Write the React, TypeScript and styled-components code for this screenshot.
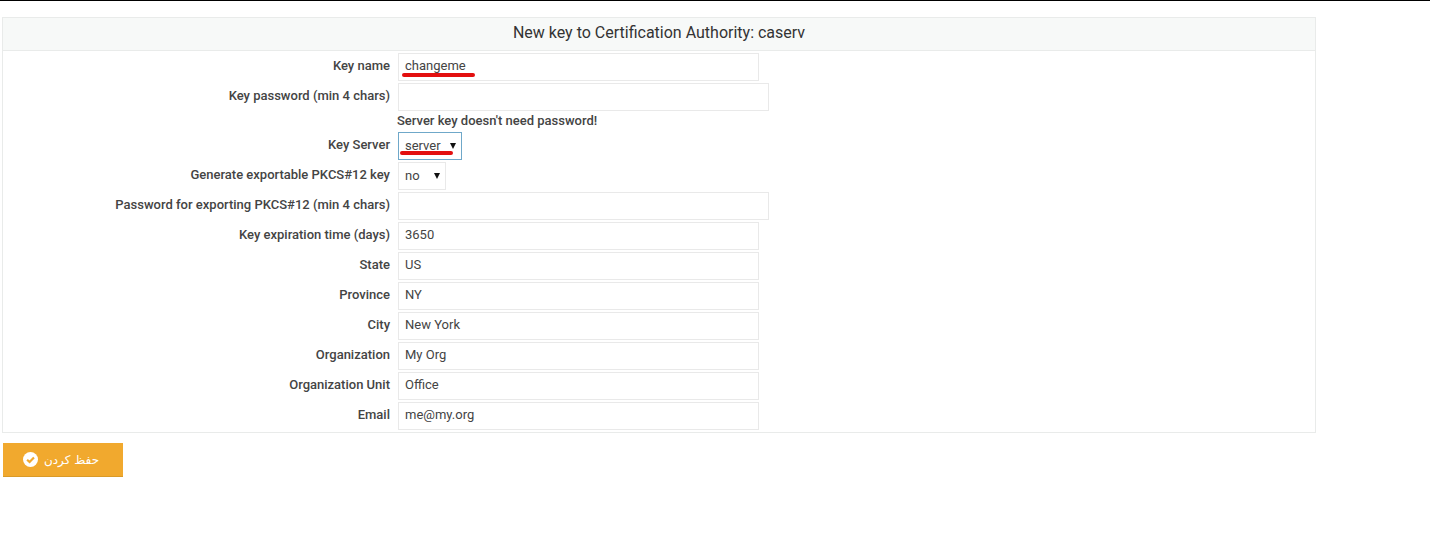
import React from "react";
import styled, { createGlobalStyle } from "styled-components";

const Global = createGlobalStyle`
  html, body { margin: 0; padding: 0; background: #fff; }
  body { font-family: Roboto, "Liberation Sans", sans-serif; color: #222; height: 540px; overflow: hidden; }
`;

const Page = styled.div`
  border-top: 1px solid #000;
  padding: 16px 0 0 2px;
`;

const Panel = styled.div`
  border: 1px solid #e9ebea;
  box-sizing: border-box;
  width: 1314px;
  height: 416px;
`;

const Heading = styled.h3`
  margin: 0;
  height: 33px;
  line-height: 30px;
  box-sizing: border-box;
  border-bottom: 1px solid #e9ebea;
  background: #f7f9f8;
  text-align: center;
  font-size: 16px;
  font-weight: 400;
  color: #333;
`;

const Form = styled.div`
  display: flex;
  flex-direction: column;
  gap: 2px;
  padding-top: 2px;
`;

const Row = styled.div`
  display: flex;
  align-items: center;
  height: 28px;
  gap: 8px;
`;

const Label = styled.label`
  width: 387px;
  text-align: right;
  font-size: 13px;
  font-weight: 500;
  color: #444;
  position: relative;
  top: -2px;
  white-space: nowrap;
`;

const Field = styled.div<{ $w: number; $focus?: boolean; $select?: boolean }>`
  width: ${(p) => p.$w}px;
  height: 28px;
  box-sizing: border-box;
  border: 1px solid ${(p) => (p.$focus ? "#6fa8c9" : "#e9e9e9")};
  padding: 0 0 ${(p) => (p.$select ? 2 : 4)}px 6px;
  font-size: 13px;
  color: #444;
  display: flex;
  align-items: center;
  justify-content: space-between;
  position: relative;
`;

const Arrow = styled.span`
  width: 0;
  height: 0;
  margin: 2px 5px 0 0;
  border-left: 3.5px solid transparent;
  border-right: 3.5px solid transparent;
  border-top: 6px solid #111;
`;

const Note = styled.div`
  height: 17px;
  line-height: 15px;
  margin-left: 394px;
  font-size: 13px;
  font-weight: 500;
  color: #444;
`;

const Mark = styled.span<{ $l: number; $t: number; $w: number }>`
  position: absolute;
  left: ${(p) => p.$l}px;
  top: ${(p) => p.$t}px;
  width: ${(p) => p.$w}px;
  height: 4px;
  border-radius: 2px;
  background: #e30f0f;
`;

const Save = styled.button`
  display: flex;
  align-items: center;
  justify-content: center;
  gap: 6px;
  width: 120px;
  height: 34px;
  margin: 10px 0 0 1px;
  padding: 0 4px 0 0;
  border: 0;
  border-bottom: 1px solid #d99a28;
  background: #f1a92e;
  color: #fff;
  font-family: "DejaVu Sans", "Noto Sans", sans-serif;
  font-size: 12px;
`;

const Check = () => (
  <svg width="15" height="15" viewBox="0 0 16 16" aria-hidden="true">
    <circle cx="8" cy="8" r="8" fill="#fff" />
    <path d="M4.4 8.2 7 10.7l4.7-4.8" fill="none" stroke="#f1a92e" strokeWidth="2.3" />
  </svg>
);

const details = [
  { label: "Key expiration time (days)", value: "3650" },
  { label: "State", value: "US" },
  { label: "Province", value: "NY" },
  { label: "City", value: "New York" },
  { label: "Organization", value: "My Org" },
  { label: "Organization Unit", value: "Office" },
  { label: "Email", value: "me@my.org" },
];

export default function App() {
  return (
    <>
      <Global />
      <Page>
        <Panel>
          <Heading>New key to Certification Authority: caserv</Heading>
          <Form>
            <Row>
              <Label>Key name</Label>
              <Field $w={361}>
                changeme
                <Mark $l={3} $t={19} $w={73} />
              </Field>
            </Row>
            <Row>
              <Label>Key password (min 4 chars)</Label>
              <Field $w={371} />
            </Row>
            <Note>Server key doesn't need password!</Note>
            <Row>
              <Label>Key Server</Label>
              <Field $w={64} $focus $select>
                server
                <Arrow />
                <Mark $l={1} $t={18} $w={53} />
              </Field>
            </Row>
            <Row>
              <Label>Generate exportable PKCS#12 key</Label>
              <Field $w={48} $select>
                no
                <Arrow />
              </Field>
            </Row>
            <Row>
              <Label>Password for exporting PKCS#12 (min 4 chars)</Label>
              <Field $w={371} />
            </Row>
            {details.map((r) => (
              <Row key={r.label}>
                <Label>{r.label}</Label>
                <Field $w={361}>{r.value}</Field>
              </Row>
            ))}
          </Form>
        </Panel>
        <Save>
          <Check />
          <span dir="rtl">حفظ کردن</span>
        </Save>
      </Page>
    </>
  );
}
